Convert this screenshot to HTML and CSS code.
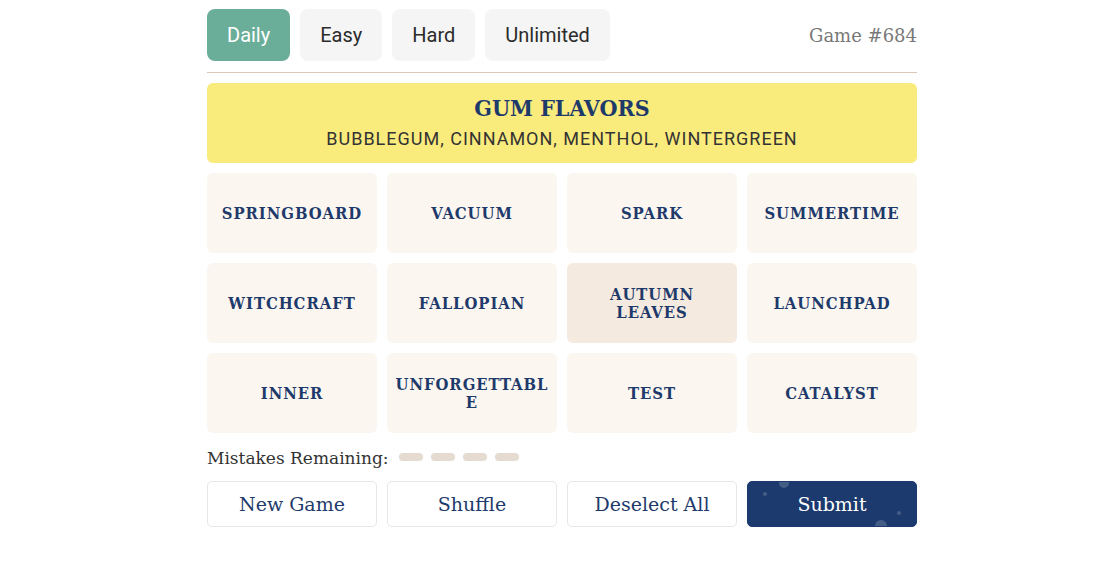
FILE: index.html
```html
<!DOCTYPE html>
<html>
<head>
<meta charset="utf-8">
<link rel="stylesheet" href="styles.css">
</head>
<body>
<div class="app">
  <div class="topbar">
    <div class="tabs">
      <button class="tab active">Daily</button>
      <button class="tab">Easy</button>
      <button class="tab">Hard</button>
      <button class="tab">Unlimited</button>
    </div>
    <div class="gamenum">Game #684</div>
  </div>
  <div class="solved">
    <div class="solved-title">GUM FLAVORS</div>
    <div class="solved-words">BUBBLEGUM, CINNAMON, MENTHOL, WINTERGREEN</div>
  </div>
  <div class="grid">
    <div class="tile">SPRINGBOARD</div>
    <div class="tile">VACUUM</div>
    <div class="tile">SPARK</div>
    <div class="tile">SUMMERTIME</div>
    <div class="tile">WITCHCRAFT</div>
    <div class="tile">FALLOPIAN</div>
    <div class="tile selected">AUTUMN LEAVES</div>
    <div class="tile">LAUNCHPAD</div>
    <div class="tile">INNER</div>
    <div class="tile">UNFORGETTABLE</div>
    <div class="tile">TEST</div>
    <div class="tile">CATALYST</div>
  </div>
  <div class="mistakes">
    <span>Mistakes Remaining:</span>
    <span class="dots"><i></i><i></i><i></i><i></i></span>
  </div>
  <div class="actions">
    <button class="btn">New Game</button>
    <button class="btn">Shuffle</button>
    <button class="btn">Deselect All</button>
    <button class="btn submit">Submit
      <span class="bub b1"></span><span class="bub b2"></span><span class="bub b3"></span><span class="bub b4"></span>
    </button>
  </div>
</div>
</body>
</html>
```
FILE: styles.css
```css
* { box-sizing: border-box; }
body {
  margin: 0;
  padding-left: 18px;
  background: #fff;
  font-family: "Roboto Slab", "DejaVu Serif", serif;
}
.app {
  width: 710px;
  margin: 0 auto;
  padding-top: 9px;
}
.topbar {
  display: flex;
  align-items: center;
  justify-content: space-between;
  padding-bottom: 11px;
  border-bottom: 1px solid #d9c7b8;
}
.tabs { display: flex; gap: 10px; }
.tab {
  font-family: Roboto, "Liberation Sans", sans-serif;
  font-size: 20px;
  height: 52px;
  padding: 0 20px;
  border: none;
  border-radius: 8px;
  background: #f5f5f5;
  color: #2b2b2b;
}
.tab.active { background: #6aae9a; color: #fff; }
.gamenum {
  font-size: 18px;
  color: #787878;
}
.solved {
  margin-top: 10px;
  height: 80px;
  border-radius: 6px;
  background: #faeb7d;
  display: flex;
  flex-direction: column;
  align-items: center;
  justify-content: center;
}
.solved-title {
  font-family: "DejaVu Serif Condensed", "DejaVu Serif", serif;
  font-stretch: condensed;
  font-size: 23px;
  font-weight: 700;
  color: #1e3a6b;
  margin-top: -3px;
}
.solved-words {
  margin-top: 7px;
  font-family: Roboto, "Liberation Sans", sans-serif;
  font-size: 18px;
  letter-spacing: 1px;
  color: #333;
}
.grid {
  margin-top: 10px;
  display: grid;
  grid-template-columns: repeat(4, 1fr);
  grid-auto-rows: 80px;
  gap: 10px;
}
.tile {
  background: #fbf6f0;
  border-radius: 6px;
  display: flex;
  align-items: center;
  justify-content: center;
  text-align: center;
  font-family: "DejaVu Serif Condensed", "DejaVu Serif", serif;
  font-stretch: condensed;
  font-size: 16.5px;
  font-weight: 700;
  letter-spacing: 0.95px;
  line-height: 18px;
  color: #1e3a6b;
  padding: 2px 6px 0;
  overflow-wrap: anywhere;
}
.tile.selected { background: #f4eadf; }
.mistakes {
  margin-top: 15px;
  display: flex;
  align-items: center;
  gap: 10px;
  font-size: 17px;
  color: #333;
  height: 20px;
}
.dots { display: flex; gap: 8px; margin-top: -2px; }
.dots i {
  width: 24px;
  height: 8px;
  border-radius: 4px;
  background: #e6dbd1;
}
.actions {
  margin-top: 13px;
  display: grid;
  grid-template-columns: repeat(4, 1fr);
  gap: 10px;
}
.btn {
  height: 46px;
  background: #fff;
  border: 1px solid #e6e6e6;
  border-radius: 5px;
  font-family: "Roboto Slab", "DejaVu Serif", serif;
  font-size: 19px;
  color: #1e3a6b;
}
.btn.submit {
  position: relative;
  overflow: hidden;
  background: #1c3a6d;
  border-color: #1c3a6d;
  color: #fff;
  font-weight: 500;
}
.bub { position: absolute; border-radius: 50%; background: rgba(255,255,255,0.18); }
.b1 { width: 10px; height: 10px; left: 31px; top: -4px; }
.b2 { width: 4px; height: 4px; left: 15px; top: 10px; }
.b3 { width: 12px; height: 12px; left: 127px; top: 38px; }
.b4 { width: 4px; height: 4px; left: 149px; top: 29px; }
```
